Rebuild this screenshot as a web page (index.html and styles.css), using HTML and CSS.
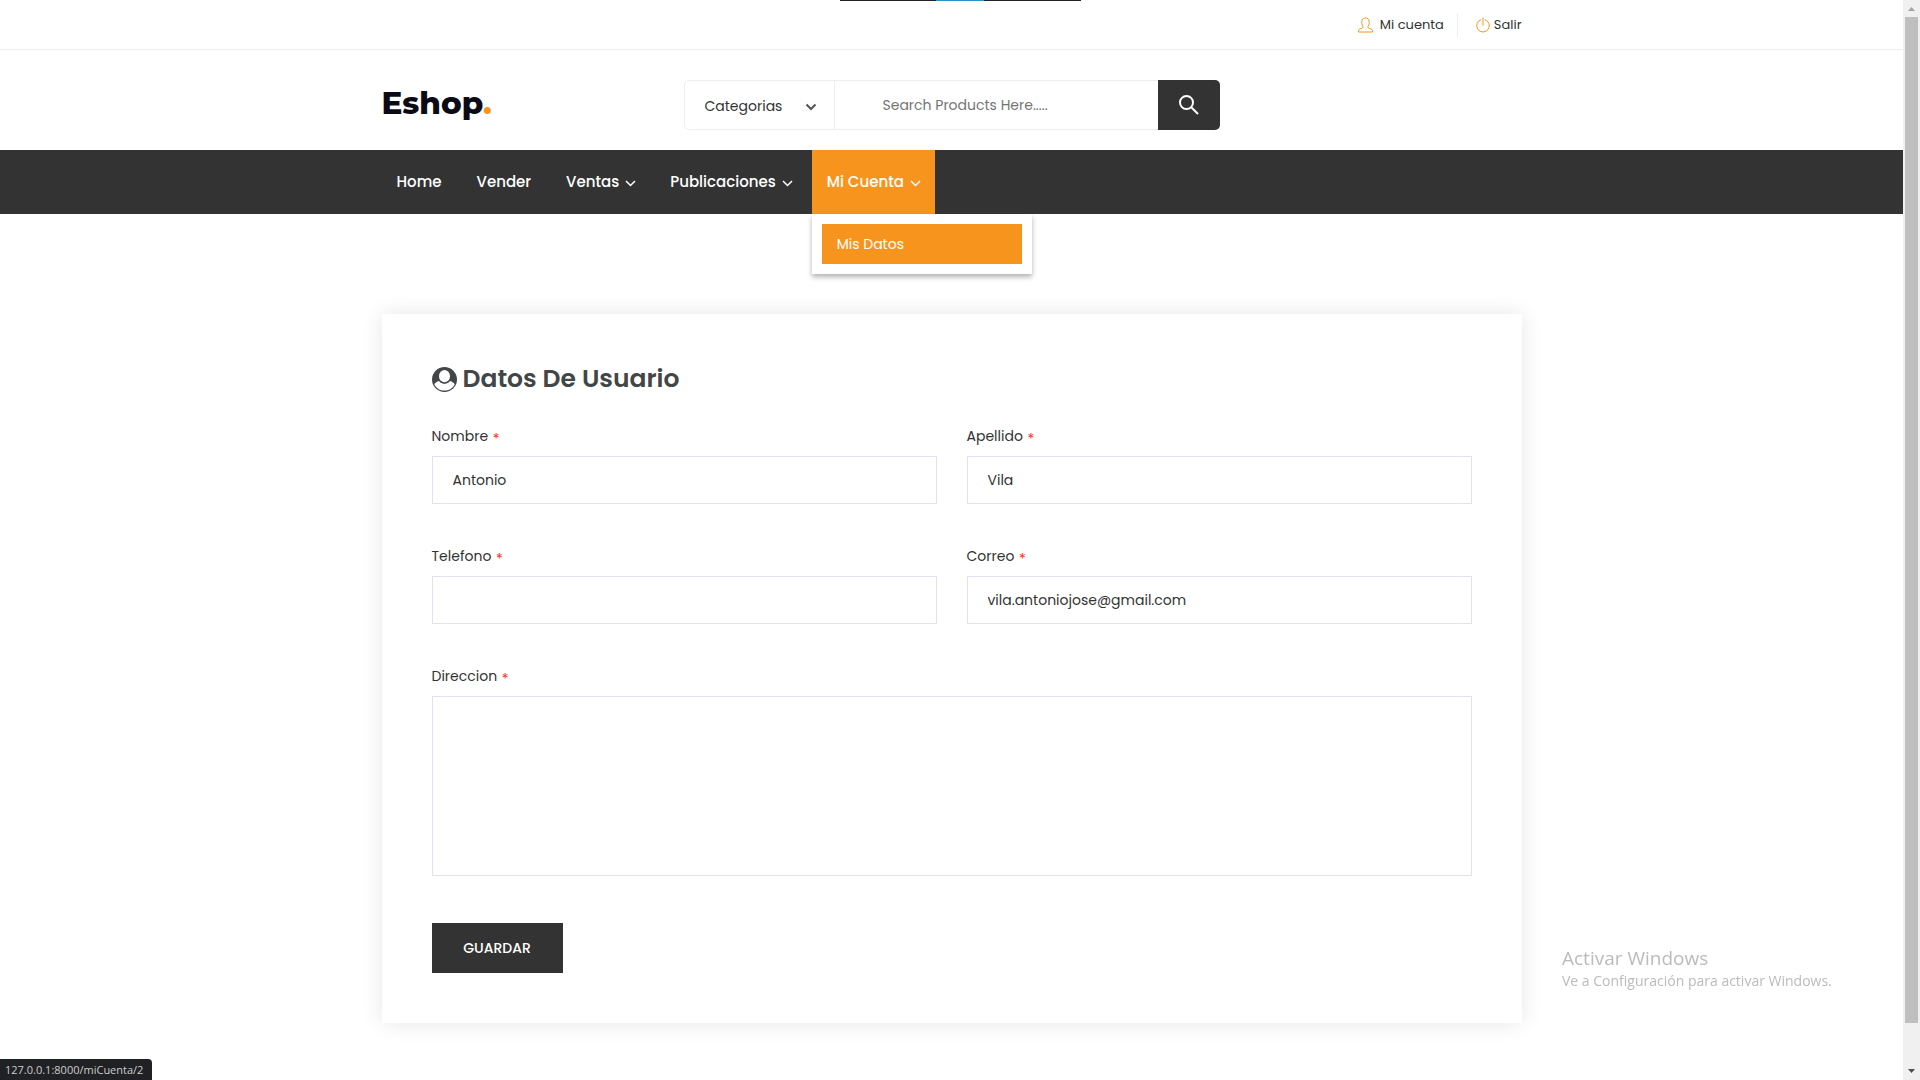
FILE: index.html
```html
<!DOCTYPE html>
<html lang="es">
<head>
<meta charset="utf-8">
<meta name="viewport" content="width=device-width, initial-scale=1">
<title>Eshop - Mi cuenta</title>
<link rel="stylesheet" href="styles.css">
</head>
<body>
<header>
  <div class="topbar">
    <div class="container topbar-links">
      <a class="top-link account" href="#"><svg width="15" height="16" viewBox="0 0 15 16"><path d="M5 9.500C3.500 7.500 3.700 5.500 3.900 4C4.200 1.800 5.700 1 7.500 1s3.300.8 3.600 3c.2 1.500.4 3.500-1.100 5.500 0 1.600.6 1.700 2.200 2.100 1.800.5 2.300 1.200 2.300 3.400H.5c0-2.200.5-2.900 2.300-3.400C4.400 11.200 5 11.100 5 9.500z"/></svg>Mi cuenta</a>
      <a class="top-link" href="#"><svg width="14" height="16" viewBox="0 0 14 16"><path d="M5 2.700a6.300 6.300 0 1 0 4 0M7 .500v8"/></svg>Salir</a>
    </div>
  </div>
  <div class="container brandbar">
    <a class="logo" href="#">Eshop<span>.</span></a>
    <form class="search">
      <div class="category">
        <select aria-label="Categorias"><option>Categorias</option></select>
        <svg width="12" height="8" viewBox="0 0 12 8"><path d="M1.500 1.500 6 6l4.500-4.500"/></svg>
      </div>
      <input type="search" aria-label="Buscar" placeholder="Search Products Here.....">
      <button type="button" aria-label="Buscar"><svg width="20" height="20" viewBox="0 0 20 20"><circle cx="7.500" cy="7.500" r="6.500"/><path d="m12 12 7 7"/></svg></button>
    </form>
  </div>
  <nav class="navbar">
    <ul class="container menu">
      <li><a href="#">Home</a></li>
      <li><a href="#">Vender</a></li>
      <li><a href="#">Ventas<svg width="11" height="7" viewBox="0 0 11 7"><path d="m1 1 4.500 4.500L10 1"/></svg></a></li>
      <li><a href="#">Publicaciones<svg width="11" height="7" viewBox="0 0 11 7"><path d="m1 1 4.500 4.500L10 1"/></svg></a></li>
      <li class="active"><a href="#">Mi Cuenta<svg width="11" height="7" viewBox="0 0 11 7"><path d="m1 1 4.500 4.500L10 1"/></svg></a>
        <div class="dropdown"><a href="#">Mis Datos</a></div>
      </li>
    </ul>
  </nav>
</header>
<main class="container">
  <form class="card">
    <h1><svg width="25" height="25" viewBox="0 0 26 26"><circle class="ring" cx="13" cy="13" r="13"/><ellipse class="face" cx="13" cy="9.500" rx="5.700" ry="6.500"/><path class="face" d="M7.400 14.500C8.500 16.500 10.500 17.300 13 17.300s4.500-.8 5.600-2.800c2.600.7 4.300 2 5 3.400C21.700 22 17.700 24.500 13 24.500S4.300 22 2.400 17.900c.7-1.400 2.400-2.700 5-3.400z"/><path class="chin" d="M7.400 13.500C8.600 15.600 10.600 16.500 13 16.500s4.400-.9 5.600-3"/></svg>Datos De Usuario</h1>
    <div class="fields">
      <div class="field"><label for="nombre">Nombre <span>*</span></label><input id="nombre" type="text" value="Antonio"></div>
      <div class="field"><label for="apellido">Apellido <span>*</span></label><input id="apellido" type="text" value="Vila"></div>
      <div class="field"><label for="telefono">Telefono <span>*</span></label><input id="telefono" type="tel"></div>
      <div class="field"><label for="correo">Correo <span>*</span></label><input id="correo" type="email" value="vila.antoniojose@gmail.com"></div>
      <div class="field wide"><label for="direccion">Direccion <span>*</span></label><textarea id="direccion"></textarea></div>
    </div>
    <button class="save" type="button">GUARDAR</button>
  </form>
</main>
<div class="top-strip"></div>
<aside class="activation"><p class="activation-title">Activar Windows</p><p>Ve a Configuración para activar Windows.</p></aside>
<div class="status">127.0.0.1:8000/miCuenta/2</div>
<div class="scrollbar"><svg width="7" height="4" viewBox="0 0 7 4"><path fill="#a3a3a3" d="M0 4 3.500 0 7 4z"/></svg><div class="thumb"></div><svg width="7" height="4" viewBox="0 0 7 4"><path fill="#505050" d="M0 0h7L3.500 4z"/></svg></div>
</body>
</html>
```
FILE: styles.css
```css
* { box-sizing: border-box; }
body {
  margin: 0;
  padding-right: 17px;
  background: #fff;
  color: #333;
  font: 400 14px/24px Poppins, Inter, sans-serif;
}
a { color: inherit; text-decoration: none; }
svg { flex: none; fill: none; stroke: currentColor; }
input, select, textarea, button { font: inherit; color: inherit; border-radius: 0; outline: 0; }
.container { width: 100%; max-width: 1140px; margin: 0 auto; }

.topbar { border-bottom: 1px solid #eee; padding: 13px 0 12px; }
.topbar-links { display: flex; justify-content: flex-end; }
.top-link { display: flex; align-items: center; gap: 4px; font-size: 13px; }
.top-link svg { stroke: #f7941d; }
.account { gap: 7px; padding-right: 13px; margin-right: 18px; border-right: 1px solid #eee; }

.brandbar { display: flex; align-items: center; height: 100px; padding-top: 10px; }
.logo { width: 302px; padding-bottom: 4px; font: 800 31px/40px Montserrat, Inter, sans-serif; color: #0b0b15; }
.logo span { color: #f7941d; }
.search { display: flex; width: 100%; max-width: 536px; height: 50px; border: 1px solid #eee; border-right: 0; border-radius: 5px; }
.category { position: relative; display: flex; width: 150px; border-right: 1px solid #eee; }
.category select { appearance: none; width: 100%; border: 0; background: none; padding: 2px 20px 0; }
.category svg { position: absolute; right: 17px; top: 22px; stroke: #555; stroke-width: 2; pointer-events: none; }
.search input { flex: 1; min-width: 0; border: 0; padding: 0 48px; background: none; }
.search input::placeholder { color: #757575; opacity: 1; }
.search button { display: grid; place-items: center; width: 62px; margin: -1px 0; border: 0; border-radius: 0 5px 5px 0; padding: 0; background: #333; color: #fff; }
.search button svg { stroke-width: 2; }

.navbar { background: #333; color: #fff; }
.menu { display: flex; gap: 5px; padding: 0; list-style: none; }
.menu li { position: relative; }
.menu li > a { display: flex; align-items: center; gap: 6px; padding: 20px 15px; font-weight: 500; font-size: 15px; }
.menu svg { stroke-width: 1.5; margin: 2px -1px 0 0; }
.active { background: #f7941d; }
.dropdown { position: absolute; top: 100%; left: 0; width: 220px; padding: 10px; background: #fff; box-shadow: 0 3px 5px rgba(0, 0, 0, .3); }
.dropdown a { display: block; padding: 8px 15px; background: #f7941d; }

.card { margin: 100px 0 50px; padding: 51px 50px 50px; background: #fff; box-shadow: 0 0 20px rgba(0, 0, 0, .1); }
h1 { display: flex; align-items: center; gap: 6px; margin: 0 0 31px; font-size: 25px; line-height: 28px; font-weight: 600; color: #424646; }
h1 .ring { fill: #424646; stroke: none; }
h1 .face { fill: #fff; stroke: none; }
h1 .chin { stroke: #424646; }
.fields { display: grid; grid-template-columns: 1fr 1fr; gap: 40px 30px; }
.field { display: flex; flex-direction: column; gap: 8px; }
.wide { grid-column: 1 / -1; }
.field label { height: 24px; }
.field span { color: #ff2c18; margin-left: 1px; vertical-align: -3px; line-height: 16px; }
.field input, .field textarea { width: 100%; height: 48px; border: 1px solid #e2e2f2; padding: 0 20px; background: #fff; }
.field textarea { height: 180px; padding: 12px 20px; resize: none; }
.save { display: block; width: 131px; height: 50px; margin-top: 47px; border: 0; background: #333; color: #fff; font-weight: 500; }

.top-strip { position: fixed; top: 0; left: 840px; width: 241px; height: 1px; background: linear-gradient(90deg, #222 96px, #2991c8 96px, #2991c8 144px, #222 144px); }
.activation { position: fixed; right: 83px; bottom: 89px; width: 275px; color: #bbb; font: 400 14px/20px "Segoe UI", "Open Sans", sans-serif; white-space: nowrap; }
.activation p { margin: 0; }
.activation .activation-title { font-size: 19px; line-height: 26px; }
.status { position: fixed; left: 0; bottom: 0; padding: 1px 9px 0 5px; border-radius: 0 4px 0 0; background: #202124; color: #ccc; font: 11px/20px "Segoe UI", "Open Sans", sans-serif; }
.scrollbar { position: fixed; inset: 0 0 0 auto; width: 17px; display: flex; flex-direction: column; justify-content: space-between; align-items: center; padding: 7px 0; background: #f0f0f0; }
.scrollbar svg { stroke: none; }
.thumb { flex: 1; width: 13px; margin: 6px 0 46px; background: #bfbfbf; }
```
